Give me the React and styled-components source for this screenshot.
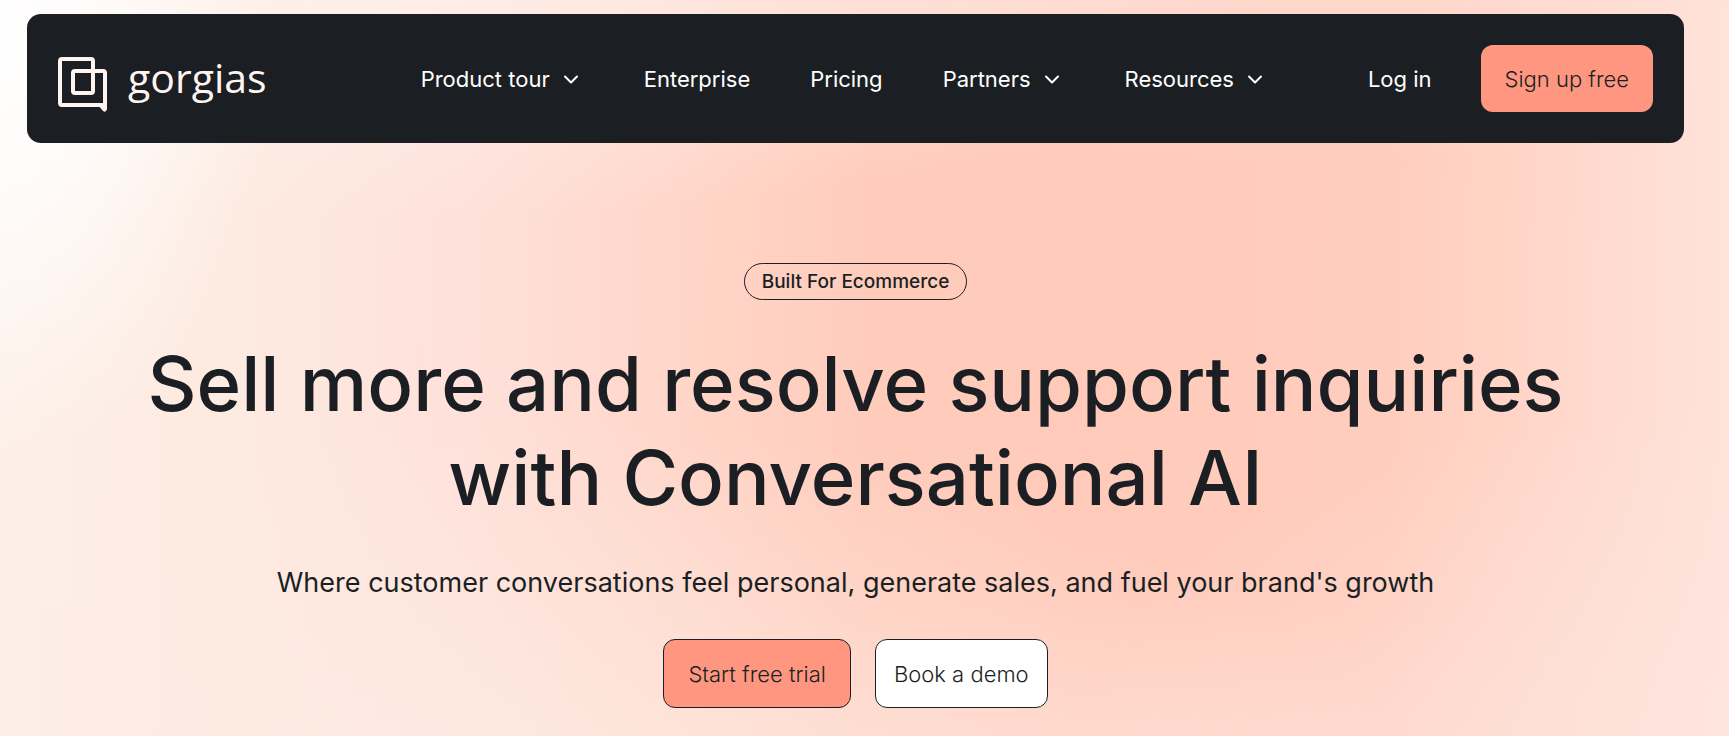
import React from "react";
import styled, { createGlobalStyle } from "styled-components";

const ink = "#1b1f23";
const coral = "#ff9780";

const GlobalStyle = createGlobalStyle`
  *, *::before, *::after { box-sizing: border-box; }
  html { min-height: 100%; }
  body {
    margin: 0;
    min-height: 100vh;
    color: ${ink};
    font-family: Inter, "Liberation Sans", sans-serif;
    background:
      radial-gradient(ellipse 16% 56% at 0% 6%, #ffffff 0%, rgba(255, 255, 255, 0.7) 40%, rgba(255, 255, 255, 0) 100%),
      radial-gradient(ellipse 50% 30% at 22% 0%, rgba(255, 246, 242, 0.6) 0%, rgba(255, 246, 242, 0) 100%),
      radial-gradient(ellipse 58% 56% at 24% 112%, rgba(253, 236, 228, 0.9) 0%, rgba(253, 236, 228, 0) 100%),
      radial-gradient(ellipse 75% 22% at 60% 0%, rgba(255, 226, 218, 0.6) 0%, rgba(255, 226, 218, 0) 100%),
      radial-gradient(ellipse 40% 50% at 102% 104%, rgba(254, 230, 224, 0.8) 0%, rgba(254, 230, 224, 0) 100%),
      radial-gradient(ellipse 40% 24% at 66% 106%, rgba(255, 218, 206, 0.7) 0%, rgba(255, 218, 206, 0) 100%),
      linear-gradient(91deg, #fdf0e8 0%, #fdeae0 14%, #fee1da 27%, #ffd7cb 38%, #ffccbc 50%, #ffcaba 62%, #ffcdbe 80%, #ffdace 92%, #ffe3db 100%);
  }
`;

const Page = styled.div`
  padding: 14px 45px 28px 27px;
`;

const Header = styled.header`
  display: flex;
  align-items: center;
  padding: 31px;
  border-radius: 14px;
  background: ${ink};
`;

const Logo = styled.a`
  display: flex;
  align-items: center;
  gap: 20px;
  color: #fff4f0;
  text-decoration: none;
`;

const LogoMark = styled.svg`
  width: 50px;
  height: 56px;
  margin-top: 10px;
`;

const Wordmark = styled.span`
  padding-bottom: 4px;
  font: 500 41px/48px "Open Sans", sans-serif;
`;

const Nav = styled.nav`
  display: flex;
  flex: 1;
  align-items: center;
  gap: 60px;
  margin-left: 154px;
`;

const NavLink = styled.a`
  color: #fff;
  font-size: 22px;
  line-height: 32px;
  text-decoration: none;
  white-space: nowrap;
`;

const NavButton = styled.button`
  display: flex;
  align-items: center;
  gap: 8px;
  padding: 0;
  border: 0;
  background: none;
  color: #fff;
  font: 400 22px/32px Inter, sans-serif;
  white-space: nowrap;
`;

const Account = styled.div`
  display: flex;
  align-items: center;
  gap: 49px;
`;

const Button = styled.button`
  height: ${(p) => (p.$outlined ? 69 : 67)}px;
  padding: 0 ${(p) => (p.$tight ? 18 : 24)}px;
  border: ${(p) => (p.$outlined ? `1px solid ${ink}` : "0")};
  border-radius: 12px;
  background: ${(p) => (p.$light ? "#fff" : coral)};
  color: ${ink};
  font: 300 22px/32px Inter, sans-serif;
  white-space: nowrap;
`;

const Hero = styled.main`
  display: flex;
  flex-direction: column;
  align-items: center;
  padding-top: 120px;
  text-align: center;
`;

const Badge = styled.span`
  padding: 0 17px;
  border: 1px solid ${ink};
  border-radius: 19px;
  font-size: 19px;
  font-weight: 500;
  line-height: 35px;
`;

const Title = styled.h1`
  margin: 36px 0 0;
  font-size: 76px;
  font-weight: 500;
  line-height: 94px;
`;

const Subtitle = styled.p`
  margin: 39px 0 0;
  font-size: 27px;
  font-weight: 400;
  line-height: 40px;
`;

const Actions = styled.div`
  display: flex;
  gap: 24px;
  margin-top: 36px;
`;

const Chevron = () => (
  <svg width="26" height="26" viewBox="0 0 26 26" fill="none" stroke="currentColor" strokeWidth="2" strokeLinecap="round" strokeLinejoin="round" aria-hidden="true">
    <path d="M7 10.5l6 6 6-6" />
  </svg>
);

const menu = [
  { label: "Product tour", opens: true },
  { label: "Enterprise" },
  { label: "Pricing" },
  { label: "Partners", opens: true },
  { label: "Resources", opens: true },
];

export default function App() {
  return (
    <>
      <GlobalStyle />
      <Page>
        <Header>
          <Logo href="#">
            <LogoMark viewBox="0 0 50 56" fill="none" stroke="currentColor" strokeWidth="4" strokeLinejoin="round" aria-hidden="true">
              <path d="M35 35V5a2 2 0 0 0-2-2H4a2 2 0 0 0-2 2v42a2 2 0 0 0 2 2h43V17a2 2 0 0 0-2-2H17a2 2 0 0 0-2 2v18a2 2 0 0 0 2 2h16a2 2 0 0 0 2-2z" />
              <path d="M40 49h9v4q-1 4-4 2z" fill="currentColor" stroke="none" />
            </LogoMark>
            <Wordmark>gorgias</Wordmark>
          </Logo>
          <Nav aria-label="Main">
            {menu.map(({ label, opens }) =>
              opens ? (
                <NavButton key={label} type="button" aria-haspopup="true">
                  {label}
                  <Chevron />
                </NavButton>
              ) : (
                <NavLink key={label} href="#">{label}</NavLink>
              )
            )}
          </Nav>
          <Account>
            <NavLink href="#">Log in</NavLink>
            <Button type="button">Sign up free</Button>
          </Account>
        </Header>
        <Hero>
          <Badge>Built For Ecommerce</Badge>
          <Title>
            Sell more and resolve support inquiries
            <br />
            with Conversational AI
          </Title>
          <Subtitle>
            Where customer conversations feel personal, generate sales, and fuel your brand's growth
          </Subtitle>
          <Actions>
            <Button type="button" $outlined>Start free trial</Button>
            <Button type="button" $outlined $light $tight>Book a demo</Button>
          </Actions>
        </Hero>
      </Page>
    </>
  );
}
